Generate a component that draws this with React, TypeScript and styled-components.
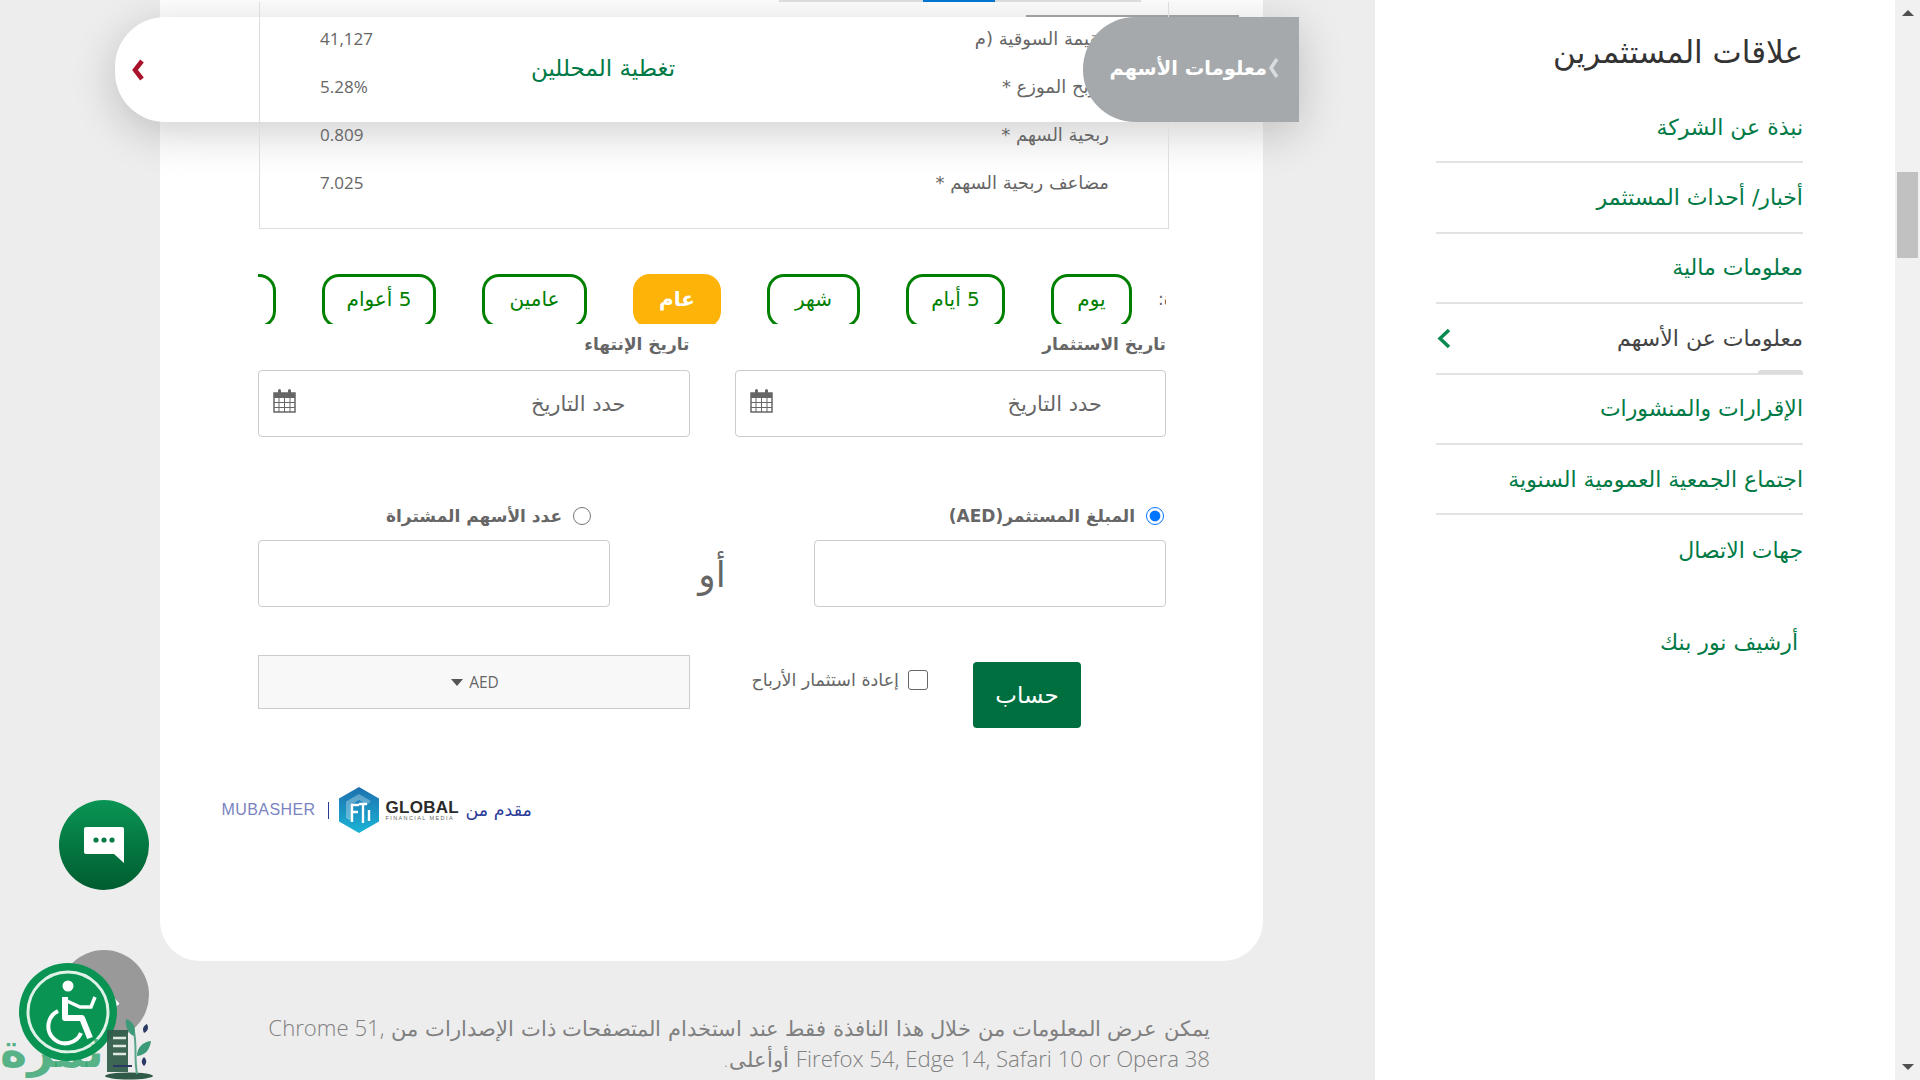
import React from 'react'
import styled, { createGlobalStyle } from 'styled-components'

const GlobalStyle = createGlobalStyle`
  html, body {
    margin: 0;
    padding: 0;
    background: #ededed;
    overflow: hidden;
  }
  * { box-sizing: border-box; }
`

const arabic = `'DejaVu Sans', 'Noto Sans', sans-serif`
const green = '#007a45'
const gray = '#666'

const Page = styled.div`
  position: relative;
  display: flex;
  width: 1920px;
  height: 1080px;
  overflow: hidden;
  background: #ededed;
  font-family: ${arabic};
`

const Main = styled.main`
  flex: 0 0 1375px;
  padding-left: 160px;
`

const Card = styled.section`
  width: 1103px;
  height: 961px;
  padding: 0 97px 0 98px;
  direction: rtl;
  background: #fff;
  border-radius: 0 0 40px 40px;
`

const TabStrip = styled.div`
  position: relative;
  width: 362px;
  height: 2px;
  margin-right: 25px;
  background: #e1e1e1;
  &::after {
    content: '';
    position: absolute;
    top: 0;
    right: 146px;
    width: 72px;
    height: 2px;
    background: #0078d4;
  }
`

/* stays above the floating bar, the bar's tab goes over it again */
const DataBox = styled.div`
  position: relative;
  z-index: 2;
  width: 910px;
  height: 227px;
  margin-right: -3px;
  padding: 12px 59px 0 60px;
  border: 1px solid #ddd;
  border-top: none;
`

const DataRow = styled.div`
  display: flex;
  justify-content: space-between;
  align-items: center;
  height: 48px;
  font-size: 18px;
  color: ${gray};
`

const Value = styled.span`
  font-family: 'Open Sans', sans-serif;
  font-size: 17px;
  direction: ltr;
`

const Tabs = styled.div`
  display: flex;
  height: 50px;
  margin-top: 45px;
  overflow: hidden;
`

const PeriodLabel = styled.div`
  display: flex;
  flex: 0 0 34px;
  min-width: 0;
  justify-content: flex-end;
  padding-left: 26px;
  font-size: 17px;
  line-height: 50px;
  color: ${gray};
  white-space: nowrap;
`

const Pill = styled.button<{ $w: number; $active?: boolean }>`
  flex: 0 0 ${p => p.$w}px;
  height: 54px;
  padding: 0 0 4px;
  border: 3px solid ${p => (p.$active ? '#fdb308' : '#008000')};
  border-radius: 17px;
  background: ${p => (p.$active ? '#fdb308' : '#fff')};
  font-family: ${arabic};
  font-size: 20px;
  font-weight: ${p => (p.$active ? 700 : 400)};
  color: ${p => (p.$active ? '#fff' : '#008000')};
  & + & { margin-right: 46px; }
`

const DateGrid = styled.div`
  display: grid;
  grid-template-columns: 1fr 1fr;
  column-gap: 45px;
  margin-top: 8px;
`

const FieldLabel = styled.div`
  height: 24px;
  font-size: 17px;
  font-weight: 700;
  line-height: 24px;
  color: ${gray};
  white-space: nowrap;
`

const DateInput = styled.div`
  display: flex;
  justify-content: space-between;
  align-items: center;
  height: 67px;
  margin-top: 14px;
  padding: 0 63px 0 14px;
  border: 1px solid #ccc;
  border-radius: 4px;
  font-size: 21px;
  color: ${gray};
  svg { margin-top: -5px; }
`

const AmountRow = styled.div`
  display: flex;
  justify-content: space-between;
  margin-top: 67px;
`

const AmountColumn = styled.div`
  flex: 0 0 352px;
`

const RadioLabel = styled.label<{ $inset: number }>`
  display: flex;
  align-items: center;
  gap: 11px;
  height: 24px;
  padding-right: ${p => p.$inset}px;
  font-size: 17px;
  font-weight: 700;
  color: ${gray};
`

const Radio = styled.input`
  width: 18px;
  height: 18px;
  margin: 0;
  accent-color: #0075ff;
`

const TextBox = styled.div`
  height: 67px;
  margin-top: 12px;
  border: 1px solid #ccc;
  border-radius: 4px;
`

const OrWord = styled.div`
  align-self: flex-end;
  height: 67px;
  font-size: 36px;
  line-height: 70px;
  color: ${gray};
`

const ActionRow = styled.div`
  display: flex;
  align-items: flex-start;
  margin-top: 48px;
`

const SubmitButton = styled.button`
  flex: 0 0 108px;
  height: 66px;
  margin: 7px 85px 0 45px;
  border: none;
  border-radius: 4px;
  background: #006f3f;
  font-family: ${arabic};
  font-size: 23px;
  color: #fff;
`

const CheckLabel = styled.label`
  display: flex;
  align-items: center;
  gap: 9px;
  margin-top: 15px;
  font-size: 17.5px;
  color: ${gray};
  white-space: nowrap;
`

const Checkbox = styled.span`
  flex: 0 0 20px;
  height: 20px;
  border: 1.5px solid #666;
  border-radius: 3px;
`

const CurrencySelect = styled.div`
  display: flex;
  justify-content: center;
  align-items: center;
  gap: 6px;
  flex: 0 0 432px;
  height: 54px;
  margin-right: auto;
  padding-left: 2px;
  direction: ltr;
  background: #f8f8f8;
  border: 1px solid #ccc;
  font-family: 'Open Sans', sans-serif;
  font-size: 15.5px;
  color: ${gray};
`

const CaretDown = styled.span`
  width: 0;
  height: 0;
  border-left: 6px solid transparent;
  border-right: 6px solid transparent;
  border-top: 7px solid #555;
`

const Provider = styled.div`
  display: flex;
  align-items: center;
  height: 46px;
  margin: 59px 634px 0 -40px;
  white-space: nowrap;
`

const ProviderText = styled.span`
  margin-left: 6px;
  font-size: 17.5px;
  color: #2b3b9a;
`

const GlobalMark = styled.div`
  display: flex;
  flex: 0 0 74px;
  flex-direction: column;
  margin-left: 5px;
  direction: ltr;
  font-family: 'Liberation Sans', sans-serif;
`

const GlobalName = styled.span`
  font-size: 17px;
  font-weight: 700;
  line-height: 15px;
  letter-spacing: 0.3px;
  color: #2a2a2a;
`

const GlobalSub = styled.span`
  font-size: 5.5px;
  line-height: 6px;
  letter-spacing: 1.4px;
  color: #666;
`

const Divider = styled.span`
  flex: 0 0 1px;
  height: 17px;
  margin: 0 4px 0 13px;
  background: #2b3990;
`

const Mubasher = styled.span`
  direction: ltr;
  font-family: 'Liberation Sans', sans-serif;
  font-size: 16px;
  letter-spacing: 0.4px;
  color: #7c84bf;
`

const Note = styled.p`
  width: 970px;
  margin: 53px 0 0 80px;
  direction: rtl;
  font-family: ${arabic};
  font-size: 21px;
  font-weight: 300;
  line-height: 31px;
  color: #808080;
`

const NoteLatin = styled.span`
  font-family: 'Open Sans', sans-serif;
  font-size: 22.2px;
  font-weight: 300;
  line-height: 1;
`

const Sidebar = styled.aside`
  flex: 0 0 520px;
  direction: rtl;
  padding: 30px 92px 0 61px;
  background: #fff;
`

const SideTitle = styled.h2`
  margin: 0;
  height: 44px;
  font-size: 31px;
  font-weight: 400;
  line-height: 44px;
  color: #333;
`

const SideList = styled.ul`
  margin: 19px 0 0;
  padding: 0;
  list-style: none;
`

const SideItem = styled.li<{ $current?: boolean; $plain?: boolean }>`
  position: relative;
  display: flex;
  justify-content: space-between;
  align-items: center;
  height: 70.4px;
  border-bottom: ${p => (p.$plain ? 'none' : '2px solid #e2e2e2')};
  font-size: 22px;
  color: ${p => (p.$current ? '#444' : green)};
`

const CurrentMark = styled.span`
  position: absolute;
  right: 0;
  bottom: -1px;
  width: 45px;
  height: 4px;
  border-radius: 3px 3px 0 0;
  background: #ddd;
`

const ArchiveLink = styled.div`
  margin: 39px 5px 0 0;
  font-size: 22px;
  line-height: 36px;
  color: ${green};
`

const Scrollbar = styled.div`
  display: flex;
  flex-direction: column;
  justify-content: space-between;
  align-items: center;
  flex: 0 0 25px;
  padding: 10px 0;
  background: #f1f1f1;
`

const ScrollArrow = styled.span<{ $down?: boolean }>`
  width: 0;
  height: 0;
  border-left: 6px solid transparent;
  border-right: 6px solid transparent;
  border-${p => (p.$down ? 'top' : 'bottom')}: 6px solid #505050;
`

const ScrollThumb = styled.span`
  position: absolute;
  top: 172px;
  right: 2px;
  width: 21px;
  height: 86px;
  background: #c1c1c1;
`

/* floating section bar, no z-index so the table can sit between it and its tab */
const StickyBar = styled.div`
  position: absolute;
  top: 17px;
  left: 115px;
  display: flex;
  align-items: center;
  width: 1184px;
  height: 105px;
  background: #fff;
  border-radius: 50px 0 0 50px;
  box-shadow: 0 10px 45px rgba(0, 0, 0, 0.2);
  &::before {
    content: '';
    position: absolute;
    top: -2px;
    left: 911px;
    width: 213px;
    height: 2px;
    background: #9c9ea0;
  }
`

const BarChevron = styled.div`
  display: flex;
  justify-content: flex-end;
  flex: 0 0 30px;
`

const BarTitle = styled.div`
  flex: 0 0 916px;
  padding-bottom: 3px;
  text-align: center;
  direction: rtl;
  font-size: 23px;
  color: ${green};
`

const BarTab = styled.div`
  position: relative;
  z-index: 3;
  display: flex;
  justify-content: flex-end;
  align-items: center;
  gap: 1px;
  flex: 0 0 216px;
  height: 105px;
  margin-left: auto;
  padding: 0 19px 3px 0;
  border-radius: 52px 0 0 52px;
  background: #a5a9ac;
  font-size: 19.5px;
  font-weight: 700;
  color: #fff;
  white-space: nowrap;
`

const Fab = styled.div<{ $top: number; $grey?: boolean }>`
  position: absolute;
  top: ${p => p.$top}px;
  left: 59px;
  display: flex;
  justify-content: center;
  align-items: center;
  width: 90px;
  height: 90px;
  border-radius: 50%;
  background: ${p => (p.$grey ? '#999' : 'linear-gradient(180deg, #0a9454, #005c30)')};
`

const AccessButton = styled.div`
  position: absolute;
  top: 963px;
  left: 19px;
  width: 98px;
  height: 98px;
`

const Watermark = styled.div`
  position: absolute;
  top: 1018px;
  left: 0;
  display: flex;
  align-items: flex-end;
  width: 152px;
  height: 62px;
`

const WatermarkWord = styled.span`
  flex: 0 0 95px;
  font-size: 46px;
  font-weight: 700;
  line-height: 58px;
  color: rgba(10, 148, 84, 0.68);
  direction: rtl;
  white-space: nowrap;
`

const CalendarIcon = () => (
  <svg width="23" height="24" viewBox="0 0 23 24">
    <rect x="1" y="4" width="21" height="19" fill="#fff" stroke="#666" strokeWidth="1.5" />
    <rect x="1" y="4" width="21" height="5" fill="#666" />
    <rect x="5" y="0" width="3" height="7" rx="1.5" fill="#666" />
    <rect x="15" y="0" width="3" height="7" rx="1.5" fill="#666" />
    <path d="M6 9v14M11.500 9v14M17 9v14M1 13.500h21M1 18.500h21" stroke="#666" strokeWidth="1" />
  </svg>
)

const Hexagon = () => (
  <svg width="42" height="46" viewBox="0 0 42 46" style={{ marginLeft: 5, flexShrink: 0 }}>
    <defs>
      <linearGradient id="hexFill" x1="0" y1="0" x2="0" y2="1">
        <stop offset="0" stopColor="#1c6fae" />
        <stop offset="1" stopColor="#1cb4d6" />
      </linearGradient>
    </defs>
    <path d="M21 0 41 11.500V34.500L21 46 1 34.500V11.500Z" fill="url(#hexFill)" />
    <path d="M33 14 21 7 8 14.500V31l5 3V18l8-5 8 5z" fill="#fff" opacity="0.3" />
    <path d="M14 35V18h7M14 25h6M25 36V17M21 17h8M31 23v11" stroke="#fff" strokeWidth="2.4" fill="none" />
  </svg>
)

const ChatIcon = () => (
  <svg width="40" height="36" viewBox="0 0 40 36">
    <path d="M2 0h36a2 2 0 0 1 2 2v34l-10-9H2a2 2 0 0 1-2-2V2a2 2 0 0 1 2-2z" fill="#fff" />
    <circle cx="12" cy="13" r="2.600" fill="#0a7a48" />
    <circle cx="20" cy="13" r="2.600" fill="#0a7a48" />
    <circle cx="28" cy="13" r="2.600" fill="#0a7a48" />
  </svg>
)

const AccessIcon = () => (
  <svg width="98" height="98" viewBox="0 0 98 98">
    <circle cx="49" cy="49" r="49" fill="#0a9454" />
    <circle cx="49" cy="49" r="40" fill="none" stroke="#dff2e8" strokeWidth="3" />
    <circle cx="49" cy="23" r="5.500" fill="#fff" />
    <path d="M46 34v21h17l8 20" fill="none" stroke="#fff" strokeWidth="6" strokeLinejoin="round" />
    <path d="M48 38l13 6h11l4-10" fill="none" stroke="#fff" strokeWidth="3.500" />
    <path d="M39 48a17 17 0 1 0 23 22" fill="none" stroke="#fff" strokeWidth="4" />
  </svg>
)

const BookPlant = () => (
  <svg width="50" height="62" viewBox="0 0 50 62" style={{ flexShrink: 0 }}>
    <path d="M3 12h21v42H3z" fill="#2f5a48" opacity="0.92" />
    <path d="M9 20h13M9 28h13M9 36h13" stroke="#dfe9e4" strokeWidth="2.500" />
    <path d="M9 48h19" stroke="#2b3a63" strokeWidth="2" />
    <ellipse cx="25" cy="58" rx="24" ry="3.500" fill="#2f5a48" />
    <path d="M33 56C30 40 33 28 30 14" stroke="#5aa58a" strokeWidth="2" fill="none" />
    <path d="M30 18C24 16 21 8 22 1c7 2 11 9 8 17z" fill="#3d9a78" />
    <path d="M33 38c0-8 5-14 14-15-1 8-5 14-14 15z" fill="#3d9a78" />
    <path d="M40 15c-2-4-1-7 3-9 2 4 1 7-3 9zM40 48c-3-3-3-6 0-9 3 3 3 6 0 9z" fill="#2b3a63" />
  </svg>
)

const rows = [
  ['القيمة السوقية (م', '41,127'],
  ['الربح الموزع *', '5.28%'],
  ['ربحية السهم *', '0.809'],
  ['مضاعف ربحية السهم *', '7.025'],
]

const periods = [
  { label: 'يوم', w: 81 },
  { label: '5 أيام', w: 99 },
  { label: 'شهر', w: 93 },
  { label: 'عام', w: 88, active: true },
  { label: 'عامين', w: 105 },
  { label: '5 أعوام', w: 114 },
  { label: '', w: 60 },
]

const menu = [
  'نبذة عن الشركة',
  'أخبار/ أحداث المستثمر',
  'معلومات مالية',
  'معلومات عن الأسهم',
  'الإقرارات والمنشورات',
  'اجتماع الجمعية العمومية السنوية',
  'جهات الاتصال',
]

const App = () => (
  <Page>
    <GlobalStyle />
    <Main>
      <Card>
        <TabStrip />
        <DataBox>
          {rows.map(([label, value]) => (
            <DataRow key={value}>
              <span>{label}</span>
              <Value>{value}</Value>
            </DataRow>
          ))}
        </DataBox>
        <Tabs>
          <PeriodLabel>الفترة:</PeriodLabel>
          {periods.map(p => (
            <Pill key={p.w} $w={p.w} $active={p.active}>{p.label}</Pill>
          ))}
        </Tabs>
        <DateGrid>
          <div>
            <FieldLabel>تاريخ الاستثمار</FieldLabel>
            <DateInput>حدد التاريخ<CalendarIcon /></DateInput>
          </div>
          <div>
            <FieldLabel>تاريخ الإنتهاء</FieldLabel>
            <DateInput>حدد التاريخ<CalendarIcon /></DateInput>
          </div>
        </DateGrid>
        <AmountRow>
          <AmountColumn>
            <RadioLabel $inset={2}>
              <Radio type="radio" name="mode" defaultChecked />
              المبلغ المستثمر(AED)
            </RadioLabel>
            <TextBox />
          </AmountColumn>
          <OrWord>أو</OrWord>
          <AmountColumn>
            <RadioLabel $inset={19}>
              <Radio type="radio" name="mode" />
              عدد الأسهم المشتراة
            </RadioLabel>
            <TextBox />
          </AmountColumn>
        </AmountRow>
        <ActionRow>
          <SubmitButton>حساب</SubmitButton>
          <CheckLabel><Checkbox />إعادة استثمار الأرباح</CheckLabel>
          <CurrencySelect><CaretDown />AED</CurrencySelect>
        </ActionRow>
        <Provider>
          <ProviderText>مقدم من</ProviderText>
          <GlobalMark>
            <GlobalName>GLOBAL</GlobalName>
            <GlobalSub>FINANCIAL MEDIA</GlobalSub>
          </GlobalMark>
          <Hexagon />
          <Divider />
          <Mubasher>MUBASHER</Mubasher>
        </Provider>
      </Card>
      <Note>
        يمكن عرض المعلومات من خلال هذا النافذة فقط عند استخدام المتصفحات ذات الإصدارات من <NoteLatin>Chrome 51, Firefox 54, Edge 14, Safari 10 or Opera 38</NoteLatin> أوأعلى.
      </Note>
    </Main>
    <Sidebar>
      <SideTitle>علاقات المستثمرين</SideTitle>
      <SideList>
        {menu.map((item, i) => (
          <SideItem key={item} $current={i === 3} $plain={i === 6}>
            {item}
            {i === 3 && (
              <svg width="16" height="21" viewBox="0 0 16 21">
                <path d="M13 2 4 10.500 13 19" fill="none" stroke="#0a8a50" strokeWidth="3.500" />
              </svg>
            )}
            {i === 3 && <CurrentMark />}
          </SideItem>
        ))}
      </SideList>
      <ArchiveLink>أرشيف نور بنك</ArchiveLink>
    </Sidebar>
    <Scrollbar>
      <ScrollArrow />
      <ScrollThumb />
      <ScrollArrow $down />
    </Scrollbar>
    <StickyBar>
      <BarChevron>
        <svg width="14" height="22" viewBox="0 0 14 22">
          <path d="M11 2 4 11l7 9" fill="none" stroke="#a8122a" strokeWidth="4.500" />
        </svg>
      </BarChevron>
      <BarTitle>تغطية المحللين</BarTitle>
      <BarTab>
        معلومات الأسهم
        <svg width="12" height="22" viewBox="0 0 12 22">
          <path d="M9 2 3 11l6 9" fill="none" stroke="#d9dbdc" strokeWidth="3.500" />
        </svg>
      </BarTab>
    </StickyBar>
    <Fab $top={800}><ChatIcon /></Fab>
    <Fab $top={950} $grey>
      <svg width="40" height="24" viewBox="0 0 40 24">
        <path d="M6 22 20 6l14 16" fill="none" stroke="#fff" strokeWidth="4" />
      </svg>
    </Fab>
    <AccessButton><AccessIcon /></AccessButton>
    <Watermark>
      <WatermarkWord>ثمرة</WatermarkWord>
      <BookPlant />
    </Watermark>
  </Page>
)

export default App
